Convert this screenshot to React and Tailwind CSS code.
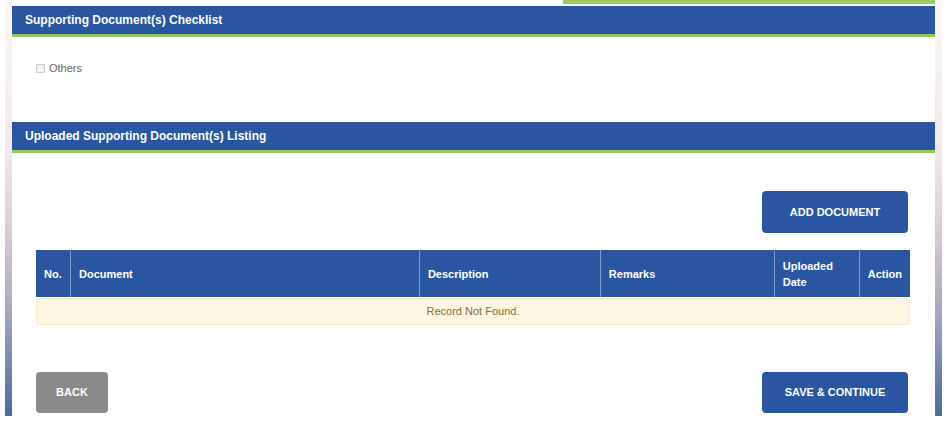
import React, { useState } from "react";

const columns = [
  { key: "no", label: "No.", width: "w-[34px]" },
  { key: "document", label: "Document", width: "w-[349px]" },
  { key: "description", label: "Description", width: "w-[181px]" },
  { key: "remarks", label: "Remarks", width: "w-[174px]" },
  { key: "uploaded", label: "Uploaded Date", width: "w-[85px]" },
  { key: "action", label: "Action", width: "flex-1" },
];

function SectionHeader({ title }) {
  return (
    <div className="h-[31px] bg-[#2a55a1] border-b-[3px] border-[#93c95a] flex items-center px-[13px]">
      <span className="text-white text-[12px] font-bold">{title}</span>
    </div>
  );
}

function SideStrip() {
  return (
    <div className="w-[7px] h-[416px] bg-[linear-gradient(to_bottom,#fbf7f7,#f3e9ec_35%,#dccbd6_55%,#a6a6c0_75%,#4a6a9a)]" />
  );
}

export default function App() {
  const [others, setOthers] = useState(false);
  const [records] = useState([]);

  return (
    <div className="w-[947px] h-[439px] bg-white flex font-['Liberation_Sans',Arial,sans-serif] overflow-hidden">
      <div className="w-[5px]" />
      <SideStrip />

      <div className="w-[923px] h-[416px] bg-white flex flex-col">
        {/* strip from the section above */}
        <div className="flex justify-end">
          <div className="w-[372px] h-[4px] bg-[#9dcb5e]" />
        </div>

        <div className="mt-[2px]">
          <SectionHeader title="Supporting Document(s) Checklist" />
        </div>

        {/* Checklist */}
        <div className="h-[85px] pl-[24px] pt-[23px]">
          <label className="flex items-center gap-[4px] text-[11px] text-[#666] cursor-pointer">
            <input
              type="checkbox"
              checked={others}
              onChange={(e) => setOthers(e.target.checked)}
              className="w-[9px] h-[9px] m-0 appearance-none border border-[#c8c8c8] bg-[#f2f2f2] rounded-[1px] checked:bg-[#2a55a1]"
            />
            Others
          </label>
        </div>

        <SectionHeader title="Uploaded Supporting Document(s) Listing" />

        {/* Listing */}
        <div className="px-[24px] pt-[38px] flex flex-col">
          <div className="flex justify-end pr-[3px]">
            <button className="w-[146px] h-[42px] rounded-[4px] bg-[#2a55a1] text-white text-[11px] font-bold">
              ADD DOCUMENT
            </button>
          </div>

          <div className="mt-[17px] w-[874px]">
            <div className="flex h-[47px] bg-[#2a55a1] text-white text-[11px] font-bold">
              {columns.map((c, i) => (
                <div
                  key={c.key}
                  className={`${c.width} flex items-center px-[8px] leading-[16px] ${
                    i > 0 ? "border-l border-[#7f9bcc]" : ""
                  }`}
                >
                  {c.key === "uploaded" ? (
                    <span>
                      Uploaded
                      <br />
                      Date
                    </span>
                  ) : (
                    c.label
                  )}
                </div>
              ))}
            </div>
            {records.length === 0 && (
              <div className="mt-px h-[27px] bg-[#fcf6e2] border border-[#f6ecc9] rounded-b-[3px] flex items-center justify-center text-[11px] text-[#8a6d3b]">
                Record Not Found.
              </div>
            )}
          </div>

          {/* Footer actions */}
          <div className="mt-[47px] flex justify-between pr-[3px]">
            <button className="w-[72px] h-[41px] rounded-[4px] bg-[#8a8a8a] text-white text-[11px] font-bold">
              BACK
            </button>
            <button className="w-[146px] h-[41px] rounded-[4px] bg-[#2a55a1] text-white text-[11px] font-bold">
              SAVE &amp; CONTINUE
            </button>
          </div>
        </div>
      </div>

      <SideStrip />
      <div className="w-[5px]" />
    </div>
  );
}
